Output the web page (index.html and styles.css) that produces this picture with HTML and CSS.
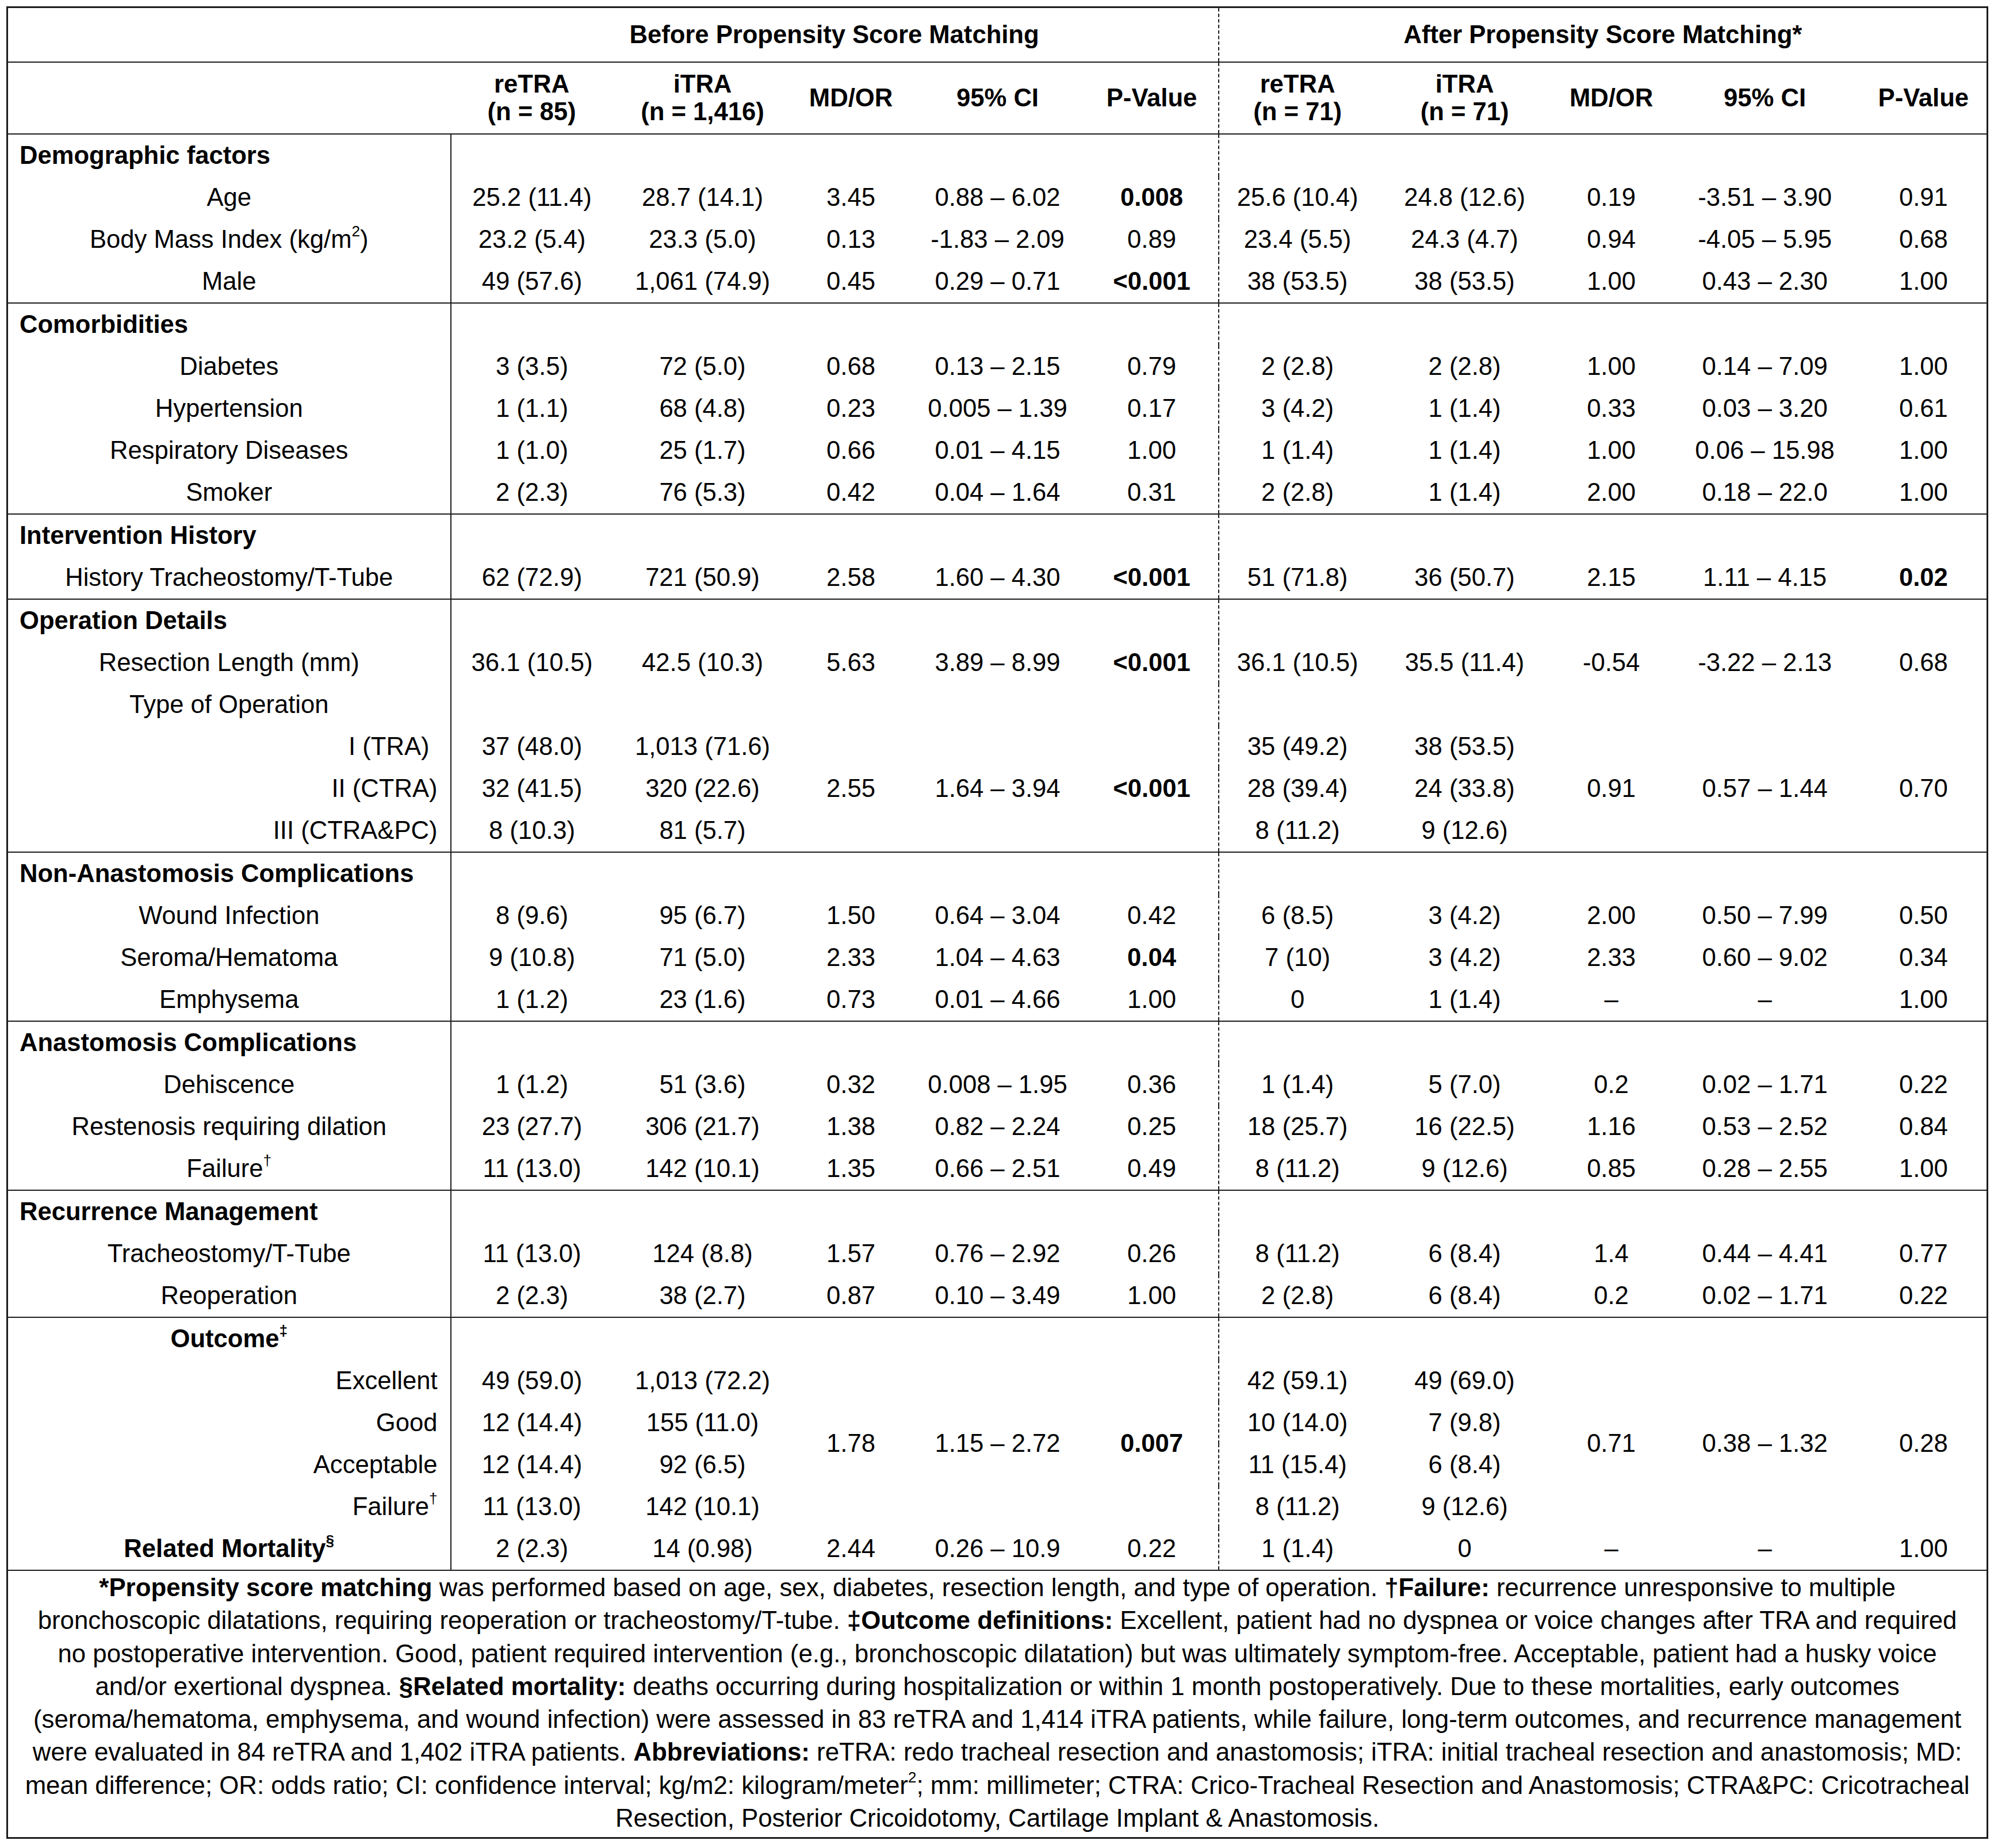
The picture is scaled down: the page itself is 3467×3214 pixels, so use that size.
FILE: index.html
```html
<!DOCTYPE html>
<html lang="en">
<head>
    <meta charset="UTF-8">
    <meta name="viewport" content="width=device-width, initial-scale=1.0">
    <title>reTRA vs iTRA - Propensity Score Matching</title>
<link rel="stylesheet" href="styles.css">
</head>
<body>
    <table class="stats">
        <colgroup>
            <col style="width: 771px">
            <col style="width: 282px">
            <col style="width: 312px">
            <col style="width: 204px">
            <col style="width: 306px">
            <col style="width: 231px">
            <col style="width: 274px">
            <col style="width: 308px">
            <col style="width: 202px">
            <col style="width: 332px">
            <col style="width: 221px">
        </colgroup>
        <thead>
            <tr class="group">
                <th></th>
                <th colspan="5">Before Propensity Score Matching</th>
                <th colspan="5" class="split">After Propensity Score Matching*</th>
            </tr>
            <tr class="cols">
                <th></th>
                <th>reTRA<br>(n = 85)</th>
                <th>iTRA<br>(n = 1,416)</th>
                <th>MD/OR</th>
                <th>95% CI</th>
                <th>P-Value</th>
                <th class="split">reTRA<br>(n = 71)</th>
                <th>iTRA<br>(n = 71)</th>
                <th>MD/OR</th>
                <th>95% CI</th>
                <th>P-Value</th>
            </tr>
        </thead>
        <tbody>
            <!-- Demographic factors -->
            <tr class="sec">
                <td class="label head">Demographic factors</td>
                <td></td><td></td><td></td><td></td><td></td>
                <td class="split"></td><td></td><td></td><td></td><td></td>
            </tr>
            <tr>
                <td class="label">Age</td>
                <td>25.2 (11.4)</td><td>28.7 (14.1)</td><td>3.45</td><td>0.88 – 6.02</td><td class="sig">0.008</td>
                <td class="split">25.6 (10.4)</td><td>24.8 (12.6)</td><td>0.19</td><td>-3.51 – 3.90</td><td>0.91</td>
            </tr>
            <tr>
                <td class="label">Body Mass Index (kg/m<sup>2</sup>)</td>
                <td>23.2 (5.4)</td><td>23.3 (5.0)</td><td>0.13</td><td>-1.83 – 2.09</td><td>0.89</td>
                <td class="split">23.4 (5.5)</td><td>24.3 (4.7)</td><td>0.94</td><td>-4.05 – 5.95</td><td>0.68</td>
            </tr>
            <tr>
                <td class="label">Male</td>
                <td>49 (57.6)</td><td>1,061 (74.9)</td><td>0.45</td><td>0.29 – 0.71</td><td class="sig">&lt;0.001</td>
                <td class="split">38 (53.5)</td><td>38 (53.5)</td><td>1.00</td><td>0.43 – 2.30</td><td>1.00</td>
            </tr>

            <!-- Comorbidities -->
            <tr class="sec">
                <td class="label head">Comorbidities</td>
                <td></td><td></td><td></td><td></td><td></td>
                <td class="split"></td><td></td><td></td><td></td><td></td>
            </tr>
            <tr>
                <td class="label">Diabetes</td>
                <td>3 (3.5)</td><td>72 (5.0)</td><td>0.68</td><td>0.13 – 2.15</td><td>0.79</td>
                <td class="split">2 (2.8)</td><td>2 (2.8)</td><td>1.00</td><td>0.14 – 7.09</td><td>1.00</td>
            </tr>
            <tr>
                <td class="label">Hypertension</td>
                <td>1 (1.1)</td><td>68 (4.8)</td><td>0.23</td><td>0.005 – 1.39</td><td>0.17</td>
                <td class="split">3 (4.2)</td><td>1 (1.4)</td><td>0.33</td><td>0.03 – 3.20</td><td>0.61</td>
            </tr>
            <tr>
                <td class="label">Respiratory Diseases</td>
                <td>1 (1.0)</td><td>25 (1.7)</td><td>0.66</td><td>0.01 – 4.15</td><td>1.00</td>
                <td class="split">1 (1.4)</td><td>1 (1.4)</td><td>1.00</td><td>0.06 – 15.98</td><td>1.00</td>
            </tr>
            <tr>
                <td class="label">Smoker</td>
                <td>2 (2.3)</td><td>76 (5.3)</td><td>0.42</td><td>0.04 – 1.64</td><td>0.31</td>
                <td class="split">2 (2.8)</td><td>1 (1.4)</td><td>2.00</td><td>0.18 – 22.0</td><td>1.00</td>
            </tr>

            <!-- Intervention History -->
            <tr class="sec">
                <td class="label head">Intervention History</td>
                <td></td><td></td><td></td><td></td><td></td>
                <td class="split"></td><td></td><td></td><td></td><td></td>
            </tr>
            <tr>
                <td class="label">History Tracheostomy/T-Tube</td>
                <td>62 (72.9)</td><td>721 (50.9)</td><td>2.58</td><td>1.60 – 4.30</td><td class="sig">&lt;0.001</td>
                <td class="split">51 (71.8)</td><td>36 (50.7)</td><td>2.15</td><td>1.11 – 4.15</td><td class="sig">0.02</td>
            </tr>

            <!-- Operation Details -->
            <tr class="sec">
                <td class="label head">Operation Details</td>
                <td></td><td></td><td></td><td></td><td></td>
                <td class="split"></td><td></td><td></td><td></td><td></td>
            </tr>
            <tr>
                <td class="label">Resection Length (mm)</td>
                <td>36.1 (10.5)</td><td>42.5 (10.3)</td><td>5.63</td><td>3.89 – 8.99</td><td class="sig">&lt;0.001</td>
                <td class="split">36.1 (10.5)</td><td>35.5 (11.4)</td><td>-0.54</td><td>-3.22 – 2.13</td><td>0.68</td>
            </tr>
            <tr>
                <td class="label">Type of Operation</td>
                <td></td><td></td><td></td><td></td><td></td>
                <td class="split"></td><td></td><td></td><td></td><td></td>
            </tr>
            <tr>
                <td class="label right short">I (TRA)</td>
                <td>37 (48.0)</td><td>1,013 (71.6)</td>
                <td rowspan="3">2.55</td><td rowspan="3">1.64 – 3.94</td><td rowspan="3" class="sig">&lt;0.001</td>
                <td class="split">35 (49.2)</td><td>38 (53.5)</td>
                <td rowspan="3">0.91</td><td rowspan="3">0.57 – 1.44</td><td rowspan="3">0.70</td>
            </tr>
            <tr>
                <td class="label right">II (CTRA)</td>
                <td>32 (41.5)</td><td>320 (22.6)</td>
                <td class="split">28 (39.4)</td><td>24 (33.8)</td>
            </tr>
            <tr>
                <td class="label right">III (CTRA&amp;PC)</td>
                <td>8 (10.3)</td><td>81 (5.7)</td>
                <td class="split">8 (11.2)</td><td>9 (12.6)</td>
            </tr>

            <!-- Non-Anastomosis Complications -->
            <tr class="sec">
                <td class="label head">Non-Anastomosis Complications</td>
                <td></td><td></td><td></td><td></td><td></td>
                <td class="split"></td><td></td><td></td><td></td><td></td>
            </tr>
            <tr>
                <td class="label">Wound Infection</td>
                <td>8 (9.6)</td><td>95 (6.7)</td><td>1.50</td><td>0.64 – 3.04</td><td>0.42</td>
                <td class="split">6 (8.5)</td><td>3 (4.2)</td><td>2.00</td><td>0.50 – 7.99</td><td>0.50</td>
            </tr>
            <tr>
                <td class="label">Seroma/Hematoma</td>
                <td>9 (10.8)</td><td>71 (5.0)</td><td>2.33</td><td>1.04 – 4.63</td><td class="sig">0.04</td>
                <td class="split">7 (10)</td><td>3 (4.2)</td><td>2.33</td><td>0.60 – 9.02</td><td>0.34</td>
            </tr>
            <tr>
                <td class="label">Emphysema</td>
                <td>1 (1.2)</td><td>23 (1.6)</td><td>0.73</td><td>0.01 – 4.66</td><td>1.00</td>
                <td class="split">0</td><td>1 (1.4)</td><td>–</td><td>–</td><td>1.00</td>
            </tr>

            <!-- Anastomosis Complications -->
            <tr class="sec">
                <td class="label head">Anastomosis Complications</td>
                <td></td><td></td><td></td><td></td><td></td>
                <td class="split"></td><td></td><td></td><td></td><td></td>
            </tr>
            <tr>
                <td class="label">Dehiscence</td>
                <td>1 (1.2)</td><td>51 (3.6)</td><td>0.32</td><td>0.008 – 1.95</td><td>0.36</td>
                <td class="split">1 (1.4)</td><td>5 (7.0)</td><td>0.2</td><td>0.02 – 1.71</td><td>0.22</td>
            </tr>
            <tr>
                <td class="label">Restenosis requiring dilation</td>
                <td>23 (27.7)</td><td>306 (21.7)</td><td>1.38</td><td>0.82 – 2.24</td><td>0.25</td>
                <td class="split">18 (25.7)</td><td>16 (22.5)</td><td>1.16</td><td>0.53 – 2.52</td><td>0.84</td>
            </tr>
            <tr>
                <td class="label">Failure<sup>†</sup></td>
                <td>11 (13.0)</td><td>142 (10.1)</td><td>1.35</td><td>0.66 – 2.51</td><td>0.49</td>
                <td class="split">8 (11.2)</td><td>9 (12.6)</td><td>0.85</td><td>0.28 – 2.55</td><td>1.00</td>
            </tr>

            <!-- Recurrence Management -->
            <tr class="sec">
                <td class="label head">Recurrence Management</td>
                <td></td><td></td><td></td><td></td><td></td>
                <td class="split"></td><td></td><td></td><td></td><td></td>
            </tr>
            <tr>
                <td class="label">Tracheostomy/T-Tube</td>
                <td>11 (13.0)</td><td>124 (8.8)</td><td>1.57</td><td>0.76 – 2.92</td><td>0.26</td>
                <td class="split">8 (11.2)</td><td>6 (8.4)</td><td>1.4</td><td>0.44 – 4.41</td><td>0.77</td>
            </tr>
            <tr>
                <td class="label">Reoperation</td>
                <td>2 (2.3)</td><td>38 (2.7)</td><td>0.87</td><td>0.10 – 3.49</td><td>1.00</td>
                <td class="split">2 (2.8)</td><td>6 (8.4)</td><td>0.2</td><td>0.02 – 1.71</td><td>0.22</td>
            </tr>

            <!-- Outcome -->
            <tr class="sec">
                <td class="label bold">Outcome<sup>‡</sup></td>
                <td></td><td></td><td></td><td></td><td></td>
                <td class="split"></td><td></td><td></td><td></td><td></td>
            </tr>
            <tr>
                <td class="label right">Excellent</td>
                <td>49 (59.0)</td><td>1,013 (72.2)</td>
                <td rowspan="4">1.78</td><td rowspan="4">1.15 – 2.72</td><td rowspan="4" class="sig">0.007</td>
                <td class="split">42 (59.1)</td><td>49 (69.0)</td>
                <td rowspan="4">0.71</td><td rowspan="4">0.38 – 1.32</td><td rowspan="4">0.28</td>
            </tr>
            <tr>
                <td class="label right">Good</td>
                <td>12 (14.4)</td><td>155 (11.0)</td>
                <td class="split">10 (14.0)</td><td>7 (9.8)</td>
            </tr>
            <tr>
                <td class="label right">Acceptable</td>
                <td>12 (14.4)</td><td>92 (6.5)</td>
                <td class="split">11 (15.4)</td><td>6 (8.4)</td>
            </tr>
            <tr>
                <td class="label right">Failure<sup>†</sup></td>
                <td>11 (13.0)</td><td>142 (10.1)</td>
                <td class="split">8 (11.2)</td><td>9 (12.6)</td>
            </tr>
            <tr>
                <td class="label bold">Related Mortality<sup>§</sup></td>
                <td>2 (2.3)</td><td>14 (0.98)</td><td>2.44</td><td>0.26 – 10.9</td><td>0.22</td>
                <td class="split">1 (1.4)</td><td>0</td><td>–</td><td>–</td><td>1.00</td>
            </tr>
        </tbody>
        <tfoot>
            <tr>
                <td colspan="11" class="note">
                    <b>*Propensity score matching</b> was performed based on age, sex, diabetes, resection length, and type of operation. <b>†Failure:</b> recurrence unresponsive to multiple<br>
                    bronchoscopic dilatations, requiring reoperation or tracheostomy/T-tube. <b>‡Outcome definitions:</b> Excellent, patient had no dyspnea or voice changes after TRA and required<br>
                    no postoperative intervention. Good, patient required intervention (e.g., bronchoscopic dilatation) but was ultimately symptom-free. Acceptable, patient had a husky voice<br>
                    and/or exertional dyspnea. <b>§Related mortality:</b> deaths occurring during hospitalization or within 1 month postoperatively. Due to these mortalities, early outcomes<br>
                    (seroma/hematoma, emphysema, and wound infection) were assessed in 83 reTRA and 1,414 iTRA patients, while failure, long-term outcomes, and recurrence management<br>
                    were evaluated in 84 reTRA and 1,402 iTRA patients. <b>Abbreviations:</b> reTRA: redo tracheal resection and anastomosis; iTRA: initial tracheal resection and anastomosis; MD:<br>
                    mean difference; OR: odds ratio; CI: confidence interval; kg/m2: kilogram/meter<sup>2</sup>; mm: millimeter; CTRA: Crico-Tracheal Resection and Anastomosis; CTRA&amp;PC: Cricotracheal<br>
                    Resection, Posterior Cricoidotomy, Cartilage Implant &amp; Anastomosis.
                </td>
            </tr>
        </tfoot>
    </table>
</body>
</html>
```

FILE: styles.css
```css
body {
    margin: 0;
    padding: 0;
    background-color: #fff;
    color: #000;
    font-family: "Liberation Sans", Arial, sans-serif;
    font-size: 43.6px;
}

.stats {
    width: 3443px;
    margin: 11px 0 0 11px;
    border-collapse: collapse;
    table-layout: fixed;
    border: 3px solid #1c1c1c;
}

.stats th,
.stats td {
    padding: 0;
    text-align: center;
    vertical-align: middle;
    line-height: 1.1;
    white-space: nowrap;
}

.stats thead .group th {
    height: 93px;
    border-bottom: 2px solid #1c1c1c;
}

.stats thead .cols th {
    height: 123px;
    border-bottom: 2px solid #1c1c1c;
}

.stats tbody td {
    height: 73px;
}

.stats tbody tr.sec td {
    border-top: 2px solid #1c1c1c;
}

.stats tbody td.label {
    border-right: 2px solid #1c1c1c;
}

.stats .split {
    border-left: 2px dashed #1c1c1c;
}

.label.head {
    text-align: left;
    font-weight: bold;
    padding-left: 20px;
}

.label.right {
    text-align: right;
    padding-right: 22px;
}

.label.short {
    padding-right: 36px;
}

.label.bold {
    font-weight: bold;
}

.sig {
    font-weight: bold;
}

sup {
    font-size: 0.6em;
    line-height: 0;
    vertical-align: 0.75em;
}

.stats tfoot td.note {
    border-top: 2px solid #1c1c1c;
    padding: 0 0 5px;
    font-size: 43.8px;
    line-height: 57.3px;
}
```
